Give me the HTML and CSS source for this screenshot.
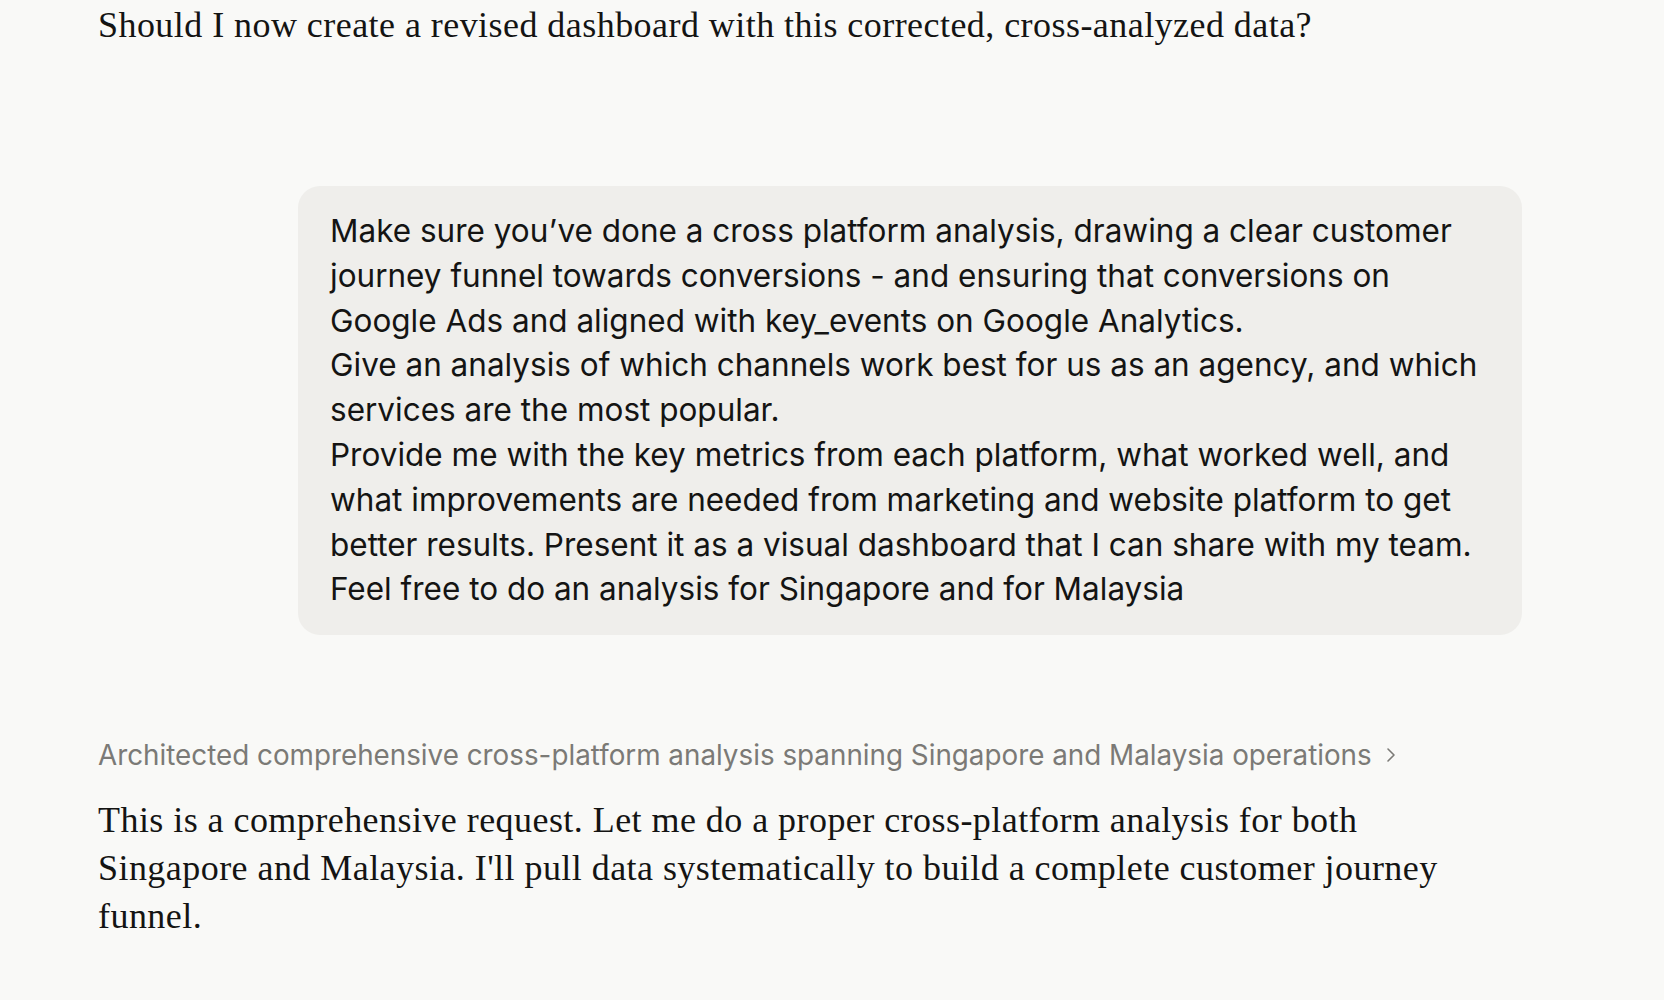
FILE: index.html
```html
<!DOCTYPE html>
<html lang="en">
<head>
<meta charset="utf-8">
<title>Chat</title>
<link rel="stylesheet" href="styles.css">
</head>
<body>
<main class="thread">
  <p class="assistant-text first">Should I now create a revised dashboard with this corrected, cross-analyzed data?</p>
  <div class="user-row">
    <div class="bubble">
      <p>Make sure you’ve done a cross platform analysis, drawing a clear customer journey funnel towards conversions - and ensuring that conversions on Google Ads and aligned with key_events on Google Analytics.</p>
      <p>Give an analysis of which channels work best for us as an agency, and which services are the most popular.</p>
      <p>Provide me with the key metrics from each platform, what worked well, and what improvements are needed from marketing and website platform to get better results. Present it as a visual dashboard that I can share with my team.</p>
      <p>Feel free to do an analysis for Singapore and for Malaysia</p>
    </div>
  </div>
  <button class="thinking" type="button">
    <span>Architected comprehensive cross-platform analysis spanning Singapore and Malaysia operations</span>
    <svg class="chev" width="14" height="16" viewBox="0 0 14 16" fill="none" stroke="currentColor" stroke-width="1.6" stroke-linecap="round" stroke-linejoin="round"><path d="M4 2 L10 8 L4 14"/></svg>
  </button>
  <p class="assistant-text">This is a comprehensive request. Let me do a proper cross-platform analysis for both Singapore and Malaysia. I'll pull data systematically to build a complete customer journey funnel.</p>
</main>
</body>
</html>
```

FILE: styles.css
```css
html, body {
  margin: 0;
  padding: 0;
  background: #f9f9f7;
}
body {
  color: #141413;
}
.thread {
  width: 1424px;
  padding: 0 0 0 98px;
  box-sizing: content-box;
}
.assistant-text {
  font-family: "Liberation Serif", "Times New Roman", serif;
  font-size: 36px;
  line-height: 48px;
  letter-spacing: 0.45px;
  margin: 0;
  max-width: 1380px;
}
.assistant-text.first {
  margin-top: 1px;
}
.user-row {
  display: flex;
  justify-content: flex-end;
  margin-top: 137px;
}
.bubble {
  width: 1224px;
  box-sizing: border-box;
  background: #efeeeb;
  border-radius: 22px;
  padding: 23px 32px 23px 32px;
  font-family: Inter, "Noto Sans", sans-serif;
  font-size: 31.5px;
  line-height: 44.8px;
  letter-spacing: 0;
}
.bubble p {
  margin: 0;
}
.thinking {
  display: flex;
  align-items: center;
  gap: 12px;
  margin: 100px 0 0 0;
  padding: 0;
  border: 0;
  background: none;
  color: #7b7a76;
  font-family: Inter, "Noto Sans", sans-serif;
  font-size: 27.8px;
  line-height: 40px;
  cursor: pointer;
}
.chev {
  color: #7b7a76;
}
.thinking + .assistant-text {
  margin-top: 21px;
}
```
